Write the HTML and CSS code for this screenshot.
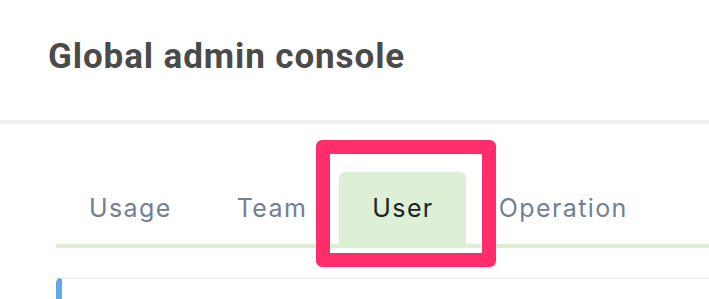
FILE: index.html
```html
<!DOCTYPE html>
<html lang="en">
<head>
    <meta charset="UTF-8">
    <meta name="viewport" content="width=device-width, initial-scale=1.0">
    <title>Global admin console</title>
    <link rel="stylesheet" href="styles.css">
</head>
<body>
    <header class="page-header">
        <h1>Global admin console</h1>
    </header>
    <div class="content">
        <nav class="tabs">
            <a class="tab" href="#">Usage</a>
            <a class="tab" href="#">Team</a>
            <a class="tab active" href="#">User</a>
            <a class="tab" href="#">Operation</a>
        </nav>
        <div class="highlight"></div>
        <div class="card"></div>
    </div>
</body>
</html>
```

FILE: styles.css
```css
body {
    margin: 0;
    padding: 0;
    background-color: #fff;
    font-family: 'Inter', 'Roboto', sans-serif;
    overflow: hidden;
}
.page-header {
    height: 120px;
    padding-left: 48px;
    border-bottom: 4px solid #efefef;
    display: flex;
    align-items: center;
}
.page-header h1 {
    margin: 0 0 8px;
    font-family: 'Roboto', sans-serif;
    font-size: 35px;
    font-weight: 700;
    letter-spacing: 0.9px;
    color: #4a4a4a;
}
.content {
    position: relative;
    padding-top: 48px;
    padding-left: 56px;
}
.tabs {
    display: flex;
    border-bottom: 4px solid #ddefd4;
}
.tab {
    height: 72px;
    padding: 0 32px 0 33px;
    display: flex;
    align-items: center;
    font-size: 25px;
    letter-spacing: 1.4px;
    color: #718096;
    text-decoration: none;
    border-radius: 6px 6px 0 0;
}
.tab.active {
    background-color: #ddefd4;
    color: #1f2328;
}
.highlight {
    position: absolute;
    left: 316px;
    top: 16px;
    width: 152px;
    height: 99px;
    border: 14px solid #ff2d6b;
    border-radius: 6px;
}
.card {
    margin-top: 29px;
    height: 40px;
    border-top: 2px solid #f2f2f2;
    border-left: 6px solid #63a9e6;
    border-radius: 6px 0 0 0;
}
```
